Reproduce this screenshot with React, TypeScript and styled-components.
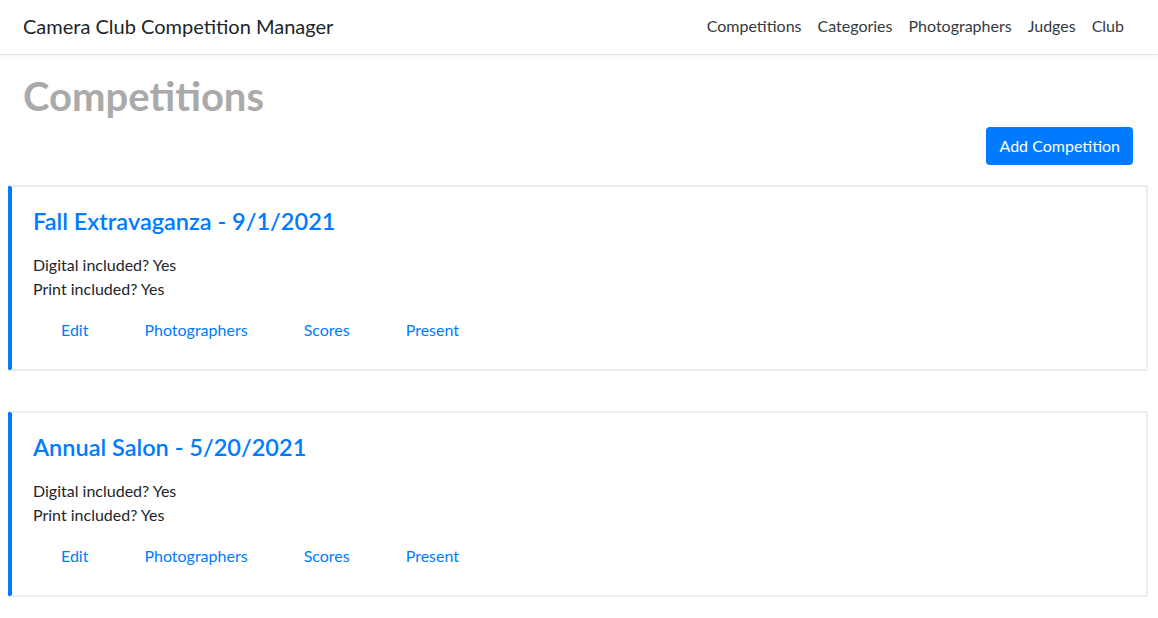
import React from "react";
import styled, { createGlobalStyle } from "styled-components";

const Global = createGlobalStyle`
  html, body { margin: 0; padding: 0; background: #fff; }
  body { font-family: Lato, "Noto Sans", sans-serif; color: #212529; font-size: 16px; }
  * { box-sizing: border-box; }
`;

const Navbar = styled.nav`
  height: 55px;
  display: flex;
  align-items: center;
  justify-content: space-between;
  padding: 0 26px 2px 23px;
  border-bottom: 1px solid #e2e2ea;
  box-shadow: 0 3px 6px rgba(0, 0, 0, 0.04);
  background: #fff;
`;

const Brand = styled.a`
  font-size: 20px;
  color: #212529;
  text-decoration: none;
  line-height: 30px;
`;

const NavLinks = styled.div`
  display: flex;
  align-items: center;
`;

const NavLink = styled.a`
  padding: 0 8px;
  font-size: 16px;
  color: #343a40;
  text-decoration: none;
  line-height: 24px;
`;

const Main = styled.main`
  padding: 0 10px 0 8px;
`;

const PageTitle = styled.h1`
  margin: 17px 0 0 15px;
  font-size: 40px;
  line-height: 48px;
  font-weight: 700;
  color: #aaaaaa;
`;

const Toolbar = styled.div`
  display: flex;
  justify-content: flex-end;
  padding-right: 15px;
  margin-top: 7px;
  margin-bottom: 20px;
`;

const PrimaryButton = styled.button`
  font-family: inherit;
  font-size: 16px;
  line-height: 24px;
  padding: 7px 13px;
  color: #fff;
  background: #007bff;
  border: none;
  border-radius: 4px;
`;

const CardList = styled.div`
  display: flex;
  flex-direction: column;
  gap: 40px;
`;

const Card = styled.section`
  border: 2px solid #ececec;
  border-left: 4px solid #007bff;
  border-radius: 3px;
  padding: 20px 20px 19px 21px;
`;

const CardTitle = styled.h3`
  margin: 0 0 17px;
  font-size: 23.5px;
  line-height: 29px;
  font-weight: 600;
  color: #007bff;
`;

const Detail = styled.p`
  margin: 0;
  font-size: 16px;
  line-height: 24px;
  color: #212529;
`;

const ActionRow = styled.div`
  display: flex;
  margin-top: 9px;
`;

const ActionLink = styled.a`
  padding: 8px 28px;
  font-size: 16px;
  line-height: 24px;
  color: #007bff;
  text-decoration: none;
`;

const competitions = [
  { name: "Fall Extravaganza", date: "9/1/2021" },
  { name: "Annual Salon", date: "5/20/2021" },
];

export default function App() {
  return (
    <>
      <Global />
      <Navbar>
        <Brand href="#">Camera Club Competition Manager</Brand>
        <NavLinks>
          {["Competitions", "Categories", "Photographers", "Judges", "Club"].map((l) => (
            <NavLink key={l} href="#">{l}</NavLink>
          ))}
        </NavLinks>
      </Navbar>
      <Main>
        <PageTitle>Competitions</PageTitle>
        <Toolbar>
          <PrimaryButton>Add Competition</PrimaryButton>
        </Toolbar>
        <CardList>
          {competitions.map((c) => (
            <Card key={c.name}>
              <CardTitle>{c.name} - {c.date}</CardTitle>
              <Detail>Digital included? Yes</Detail>
              <Detail>Print included? Yes</Detail>
              <ActionRow>
                {["Edit", "Photographers", "Scores", "Present"].map((a) => (
                  <ActionLink key={a} href="#">{a}</ActionLink>
                ))}
              </ActionRow>
            </Card>
          ))}
        </CardList>
      </Main>
    </>
  );
}
